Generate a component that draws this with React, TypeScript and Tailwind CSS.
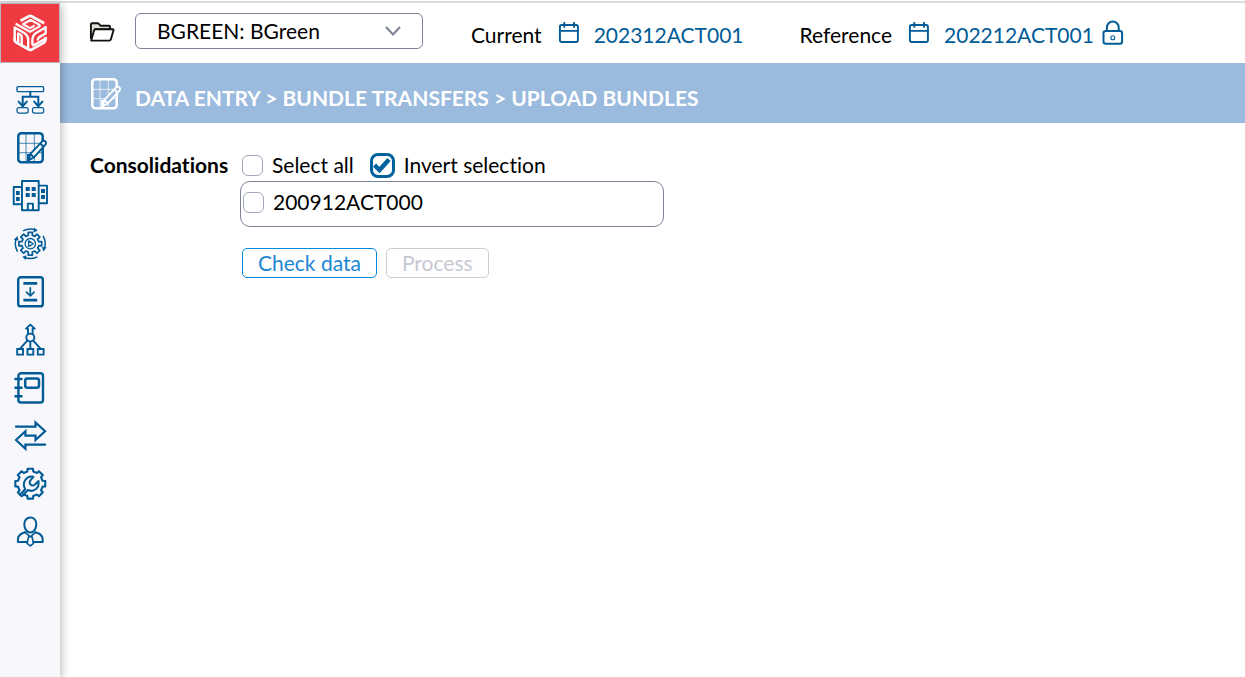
import { useState } from 'react';
import type { ReactNode } from 'react';

const gearPath = (cx: number, cy: number, inner: number, outer: number, teeth: number) => {
  const step = (Math.PI * 2) / teeth;
  const points: string[] = [];
  for (let i = 0; i < teeth; i++) {
    const a = i * step - Math.PI / 2;
    [
      [-0.3, inner],
      [-0.23, outer],
      [0.23, outer],
      [0.3, inner],
    ].forEach(([offset, r]) => {
      const t = a + offset * step;
      points.push(`${(cx + r * Math.cos(t)).toFixed(2)} ${(cy + r * Math.sin(t)).toFixed(2)}`);
    });
  }
  return `M${points.join('L')}Z`;
};

const Icon = ({ children, className = 'text-[#005b96]' }: { children: ReactNode; className?: string }) => (
  <svg
    viewBox="0 0 36 36"
    className={`size-9 shrink-0 ${className}`}
    fill="none"
    stroke="currentColor"
    strokeWidth="2"
    strokeLinejoin="round"
    strokeLinecap="round"
    aria-hidden="true"
  >
    {children}
  </svg>
);

const GridPencil = ({ pencilFill }: { pencilFill: string }) => (
  <>
    <path d="M14 3v29M22.3 3v29M6 13.3h25M6 22.7h25" strokeWidth="1" opacity="0.7" />
    <path d="M15 24h6l-4 8h-2z" fill="currentColor" stroke="none" />
    <rect x="6.3" y="3.3" width="24.4" height="29" rx="3" strokeWidth="2.5" />
    <path
      d="M16.8 30.2l1.6-6.4L30.2 11.4a2.2 2.2 0 0 1 3.2 0a2.2 2.2 0 0 1 0 3.2L21.9 27.4zM18.4 23.8l3.5 3.6M28.2 13.5l3.4 3.3"
      fill={pencilFill}
      strokeWidth="1.9"
    />
  </>
);

const menu = [
  {
    label: 'Structure',
    icon: (
      <>
        <rect x="5" y="4.6" width="26.6" height="5" rx="1" strokeWidth="1.4" />
        <path d="M18.3 9.8v5M10.7 24v-9.2h15.6V24" strokeLinejoin="miter" />
        <path d="M6.6 19.6l4.1 4.6l4.1-4.6M22.2 19.6l4.1 4.6l4.1-4.6" strokeLinejoin="miter" />
        <rect x="5" y="25.7" width="11.2" height="5.4" rx="2" strokeWidth="1.2" />
        <rect x="20.5" y="25.7" width="11.2" height="5.4" rx="2" strokeWidth="1.2" />
      </>
    ),
  },
  { label: 'Data entry', icon: <GridPencil pencilFill="#f8f8fc" /> },
  {
    label: 'Companies',
    icon: (
      <>
        <path d="M10 3h16.7v29.2H10zM10 9H1.7v17.3H10M26.7 7.6H35v17.6h-8.3M15.8 32v-6.4H21V32" strokeWidth="1.9" />
        <path
          d="M13.7 9h4v4h-4zM19.7 9h4v4h-4zM13.7 15h4v4h-4zM19.7 15h4v4h-4zM4 13h3.7v4H4zM4 19h3.7v4H4zM29 11h4v4h-4zM29 17h4v4h-4z"
          fill="currentColor"
          stroke="none"
        />
      </>
    ),
  },
  {
    label: 'Processing',
    icon: (
      <>
        <path d={gearPath(18.3, 17.7, 8.6, 11.6, 8)} strokeWidth="1.7" />
        <circle cx="18.3" cy="17.7" r="5.2" strokeWidth="1.3" />
        <path d="M16.6 14.9l4.7 2.8l-4.7 2.8z" strokeWidth="1.3" />
        <path
          d="M11.6 4.6c4-2 8.6-2 12.6-.4M31.3 10.4c2.2 4 2.4 8.4.9 12.4M24.8 31.1c-4 1.8-8.6 1.8-12.6.4M5.3 25.2c-2.2-4-2.5-8.6-1-12.6"
          strokeWidth="1.5"
        />
        <path
          d="M22.2 1.6l3.4 3.2l-4.2 1.6zM34.6 21.2l-3.2 4.3l-1.5-4.6zM14.4 29.2l-4 1.6l3.4 3.1zM1.9 13.9l3.4-4l1.3 4.5z"
          fill="currentColor"
          stroke="none"
        />
      </>
    ),
  },
  {
    label: 'Reports',
    icon: (
      <>
        <rect x="6.2" y="3.3" width="24.6" height="29" rx="2.4" strokeWidth="2.4" />
        <path d="M11.4 9.4h13.8M11.4 26.1h13.8" strokeWidth="2.8" strokeLinecap="butt" />
        <path d="M18.3 13.8v8M14.5 18.2l3.8 3.8l3.8-3.8" strokeWidth="1.7" />
      </>
    ),
  },
  {
    label: 'Consolidation',
    icon: (
      <>
        <path d="M16 11.8V6.6h-2l4.4-4l4.3 4h-2.1v5.2M18.3 19.8v7M15.3 18.6l-7.2 8M21.3 18.6l7.2 8" strokeWidth="1.9" />
        <circle cx="18.3" cy="15.6" r="4" strokeWidth="1.9" />
        <path d="M5.2 27h5.8v5.6H5.2zM15.5 27h5.8v5.6h-5.8zM25.8 27h5.8v5.6h-5.8z" strokeWidth="1.9" strokeLinejoin="miter" />
      </>
    ),
  },
  {
    label: 'Journal',
    icon: (
      <>
        <rect x="6.4" y="3.3" width="24.6" height="29.2" rx="2.6" strokeWidth="2.4" />
        <rect x="13.2" y="8.4" width="13.8" height="9.4" rx="2.2" strokeWidth="2.5" />
        <path d="M3.4 9h6.2M3.4 17.7h6.2M3.4 26.3h6.2" strokeWidth="2.4" />
      </>
    ),
  },
  {
    label: 'Transfers',
    icon: (
      <path
        d="M4 8.7h19.5V4.4l9.6 8.8l-9.6 8.8v-4.3H13.4v-4.5L4 22l9.4 8.8v-4.2h19.8"
        strokeWidth="2.2"
        strokeLinejoin="miter"
      />
    ),
  },
  {
    label: 'Settings',
    icon: (
      <>
        <path d={gearPath(18.3, 17.7, 12.6, 15.2, 8)} strokeWidth="2.1" />
        <path
          d="M8 28.8l5.2-5.6c-3.8-6.6 1.2-13.8 8.200-12.400l-3 3.600c-1.100 1.400-.9 3.400.3 4.400c1.200 1 3 .8 4.200-.4l3.600-3.400c1.200 6.800-4.600 11.800-10.600 9l-5.100 5.300"
          fill="#f8f8fc"
          strokeWidth="2"
        />
      </>
    ),
  },
  {
    label: 'User',
    icon: (
      <>
        <path d="M18.3 3.6c3.7 0 6 2.8 6 6.7c0 4.6-2.7 8.3-6 8.3s-6-3.7-6-8.3c0-3.9 2.3-6.7 6-6.7z" />
        <path d="M13.2 18.3c-4.8 1.2-7.3 3.4-7.3 7.4v2.4h9.3M23.4 18.3c4.8 1.2 7.3 3.4 7.3 7.4v2.4h-9.3" />
        <path d="M13.2 18.3l5.1 4.5l5.1-4.5M16.7 22.2l-1.6 7.2l3.2 2.5l3.2-2.5l-1.6-7.2" strokeWidth="1.6" />
      </>
    ),
  },
];

const Logo = () => (
  <svg viewBox="0 0 56 56" className="size-14" fill="none" stroke="#fff" strokeWidth="2.7" strokeLinejoin="round" aria-hidden="true">
    {/* Top face */}
    <path d="M18.5 15.7L27 11.2q1.300-.7 2.600 0l12.600 7" />
    <path d="M13.600 18.800l14.400 8l8.800-4.900q2-1.200 0-2.400l-8.200-4.600l-7.600 4.300l7 3.900l4.600-2.600" strokeWidth="2.200" />
    {/* Left face */}
    <path d="M12.700 35.500V22.500l9.500 5.500q4 2.400 4 7V44l-6.500-3.600V32q0-1.500-1.200-2.200l-2.300-1.300v8.500" strokeWidth="2.400" />
    <path d="M12.700 33v2q0 1.600 1.300 2.300l13 7.300q1.300.7 2.600 0l11.600-6.500q2.400-1.400 2.400-4V32" />
    {/* Right face */}
    <path d="M43.600 22.500l-8.800 5q-4.400 2.500-4.400 7.500v3.600q0 2.400 2.200 1.200l11-6.200" strokeWidth="2.400" />
    <path d="M43.600 21v7.500l-6 3.400q-2 1.200-2 3.600" strokeWidth="2.400" />
  </svg>
);

const CalendarIcon = () => (
  <svg viewBox="0 0 22 22" className="size-[22px]" fill="none" stroke="#005b96" strokeWidth="1.9" strokeLinecap="round" aria-hidden="true">
    <rect x="1.9" y="3" width="18" height="17" rx="1.8" />
    <path d="M2 8.9h18M6.3.9v4M16 .9v4" />
  </svg>
);

const LockIcon = () => (
  <svg viewBox="0 0 22 26" className="h-[26px] w-[22px]" fill="none" stroke="#005b96" strokeWidth="2" aria-hidden="true">
    <rect x="1.5" y="11" width="18.6" height="12.8" rx="2.2" />
    <path d="M4.9 11V7.5a5.9 5.9 0 0 1 11.8 0V11" />
    <circle cx="10.8" cy="17.8" r="2" strokeWidth="1.1" />
  </svg>
);

const FolderIcon = () => (
  <svg viewBox="0 0 26 22" className="h-[22px] w-[26px]" fill="none" stroke="#111" strokeWidth="1.9" strokeLinejoin="round" aria-hidden="true">
    <path d="M5 8.5h16V6q0-1.3-1.3-1.3h-8.2L9.3 2.3H3.2Q1.9 2.3 1.9 3.6v14.2" fill="#ddddd5" />
    <path d="M2.2 19.4L5 9.6q.4-1.3 1.7-1.3h17.1q1 0 .7 1l-2.6 9q-.4 1.3-1.7 1.3H3q-1.1 0-.8-.2z" fill="#fff" />
  </svg>
);

type CheckProps = { id: string; label: string; checked: boolean; onChange: () => void };

const Check = ({ id, label, checked, onChange }: CheckProps) => (
  <div className="flex items-center gap-[9px]">
    <span className="grid place-items-center">
      <input
        id={id}
        type="checkbox"
        checked={checked}
        onChange={onChange}
        className="col-start-1 row-start-1 size-[21px] appearance-none rounded-md border border-[#a3a9bb] bg-white checked:size-[25px] checked:rounded-lg checked:border-[3px] checked:border-[#00629c]"
      />
      {checked && (
        <svg viewBox="0 0 20 20" className="pointer-events-none col-start-1 row-start-1 size-5" fill="none" stroke="#00629c" strokeWidth="4.4" aria-hidden="true">
          <path d="M2.5 10.2l5 4.8L17 4.5" />
        </svg>
      )}
    </span>
    <label htmlFor={id}>{label}</label>
  </div>
);

const Period = ({ label, value, locked = false }: { label: string; value: string; locked?: boolean }) => (
  <div className="flex items-center pt-1">
    <span>{label}</span>
    <span className="mb-1 ml-4">
      <CalendarIcon />
    </span>
    <a href="#period" className="ml-3.5 text-[#005b96]">
      {value}
    </a>
    {locked && (
      <span className="mb-1 ml-2">
        <LockIcon />
      </span>
    )}
  </div>
);

const App = () => {
  const [all, setAll] = useState(false);
  const [invert, setInvert] = useState(true);
  const [bundle, setBundle] = useState(false);

  return (
    <div className="flex min-h-screen flex-col bg-white pt-px font-['Lato',sans-serif] text-[21px] leading-7 text-black [font-variant-ligatures:none]">
      <div className="h-0.5 bg-[#dadddc]" />
      <div className="flex grow">
        {/* Sidebar */}
        <aside className="relative z-10 w-15 shrink-0 bg-[#f8f8fc] shadow-[2px_2px_8px_rgba(0,0,0,0.25)]">
          <a href="#home" aria-label="Home" className="flex h-15 items-center justify-center border border-[#bcb4b8] bg-[#ef3a42]">
            <Logo />
          </a>
          <nav className="mt-[19px] flex flex-col items-center gap-3">
            {menu.map((item) => (
              <a key={item.label} href="#menu" aria-label={item.label}>
                <Icon>{item.icon}</Icon>
              </a>
            ))}
          </nav>
        </aside>

        <div className="min-w-0 grow">
          {/* Top bar */}
          <header className="flex h-15 items-center pl-[29px]">
            <button type="button" aria-label="Open folder" className="mb-0.5">
              <FolderIcon />
            </button>
            <div className="mb-1 ml-5 grid w-72 items-center">
              <select
                aria-label="Dossier"
                className="col-start-1 row-start-1 h-9 appearance-none rounded-md border border-[#7c8296] bg-white pl-[21px] text-[21px]"
              >
                <option>BGREEN: BGreen</option>
              </select>
              <svg viewBox="0 0 16 10" className="pointer-events-none col-start-1 row-start-1 mr-[22px] h-2.5 w-4 justify-self-end" fill="none" stroke="#7c8296" strokeWidth="2" aria-hidden="true">
                <path d="M1 1l7 7.5L15 1" />
              </svg>
            </div>
            <div className="ml-12 flex gap-14">
              <Period label="Current" value="202312ACT001" />
              <Period label="Reference" value="202212ACT001" locked />
            </div>
          </header>

          {/* Page title */}
          <div className="flex h-15 items-center bg-[#9abade] pl-[26px] text-white">
            <Icon className="mt-0.5 text-white">
              <GridPencil pencilFill="#9abade" />
            </Icon>
            <h1 className="ml-[13px] pt-2.5 text-[21px] font-bold">DATA ENTRY &gt; BUNDLE TRANSFERS &gt; UPLOAD BUNDLES</h1>
          </div>

          {/* Bundle form */}
          <form className="grid grid-cols-[150px_minmax(0,424px)] pt-7 pl-[30px]" onSubmit={(e) => e.preventDefault()}>
            <span className="font-bold">Consolidations</span>
            <div>
              <div className="flex h-7 items-center gap-4 pl-0.5">
                <Check id="all" label="Select all" checked={all} onChange={() => setAll(!all)} />
                <Check id="invert" label="Invert selection" checked={invert} onChange={() => setInvert(!invert)} />
              </div>
              <div className="mt-0.5 h-[46px] rounded-[10px] border border-[#7c8296] pt-1.5 pl-0.5">
                <Check id="bundle" label="200912ACT000" checked={bundle} onChange={() => setBundle(!bundle)} />
              </div>
              <div className="mt-[21px] flex gap-[9px] pl-0.5">
                <button type="submit" className="h-[30px] rounded-[5px] border border-[#008bdb] px-[15px] text-[#1a86d4]">
                  Check data
                </button>
                <button type="button" disabled className="h-[30px] rounded-[5px] border border-[#cbced6] px-[15px] text-[#c6c9d2]">
                  Process
                </button>
              </div>
            </div>
          </form>
        </div>
      </div>
    </div>
  );
};

export default App;
